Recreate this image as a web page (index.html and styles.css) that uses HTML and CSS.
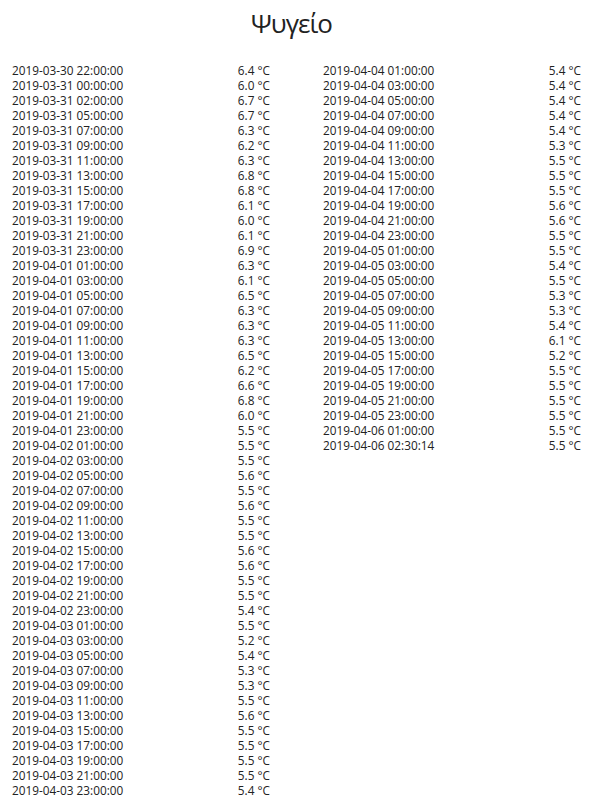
FILE: index.html
```html
<!DOCTYPE html>
<html lang="el">
<head>
    <meta charset="UTF-8">
    <title>Ψυγείο</title>
    <link rel="stylesheet" href="styles.css">
</head>
<body>
    <h1 class="title">Ψυγείο</h1>
    <div class="columns">
        <div class="log">
            <div class="row"><span>2019-03-30 22:00:00</span><span>6.4 °C</span></div>
            <div class="row"><span>2019-03-31 00:00:00</span><span>6.0 °C</span></div>
            <div class="row"><span>2019-03-31 02:00:00</span><span>6.7 °C</span></div>
            <div class="row"><span>2019-03-31 05:00:00</span><span>6.7 °C</span></div>
            <div class="row"><span>2019-03-31 07:00:00</span><span>6.3 °C</span></div>
            <div class="row"><span>2019-03-31 09:00:00</span><span>6.2 °C</span></div>
            <div class="row"><span>2019-03-31 11:00:00</span><span>6.3 °C</span></div>
            <div class="row"><span>2019-03-31 13:00:00</span><span>6.8 °C</span></div>
            <div class="row"><span>2019-03-31 15:00:00</span><span>6.8 °C</span></div>
            <div class="row"><span>2019-03-31 17:00:00</span><span>6.1 °C</span></div>
            <div class="row"><span>2019-03-31 19:00:00</span><span>6.0 °C</span></div>
            <div class="row"><span>2019-03-31 21:00:00</span><span>6.1 °C</span></div>
            <div class="row"><span>2019-03-31 23:00:00</span><span>6.9 °C</span></div>
            <div class="row"><span>2019-04-01 01:00:00</span><span>6.3 °C</span></div>
            <div class="row"><span>2019-04-01 03:00:00</span><span>6.1 °C</span></div>
            <div class="row"><span>2019-04-01 05:00:00</span><span>6.5 °C</span></div>
            <div class="row"><span>2019-04-01 07:00:00</span><span>6.3 °C</span></div>
            <div class="row"><span>2019-04-01 09:00:00</span><span>6.3 °C</span></div>
            <div class="row"><span>2019-04-01 11:00:00</span><span>6.3 °C</span></div>
            <div class="row"><span>2019-04-01 13:00:00</span><span>6.5 °C</span></div>
            <div class="row"><span>2019-04-01 15:00:00</span><span>6.2 °C</span></div>
            <div class="row"><span>2019-04-01 17:00:00</span><span>6.6 °C</span></div>
            <div class="row"><span>2019-04-01 19:00:00</span><span>6.8 °C</span></div>
            <div class="row"><span>2019-04-01 21:00:00</span><span>6.0 °C</span></div>
            <div class="row"><span>2019-04-01 23:00:00</span><span>5.5 °C</span></div>
            <div class="row"><span>2019-04-02 01:00:00</span><span>5.5 °C</span></div>
            <div class="row"><span>2019-04-02 03:00:00</span><span>5.5 °C</span></div>
            <div class="row"><span>2019-04-02 05:00:00</span><span>5.6 °C</span></div>
            <div class="row"><span>2019-04-02 07:00:00</span><span>5.5 °C</span></div>
            <div class="row"><span>2019-04-02 09:00:00</span><span>5.6 °C</span></div>
            <div class="row"><span>2019-04-02 11:00:00</span><span>5.5 °C</span></div>
            <div class="row"><span>2019-04-02 13:00:00</span><span>5.5 °C</span></div>
            <div class="row"><span>2019-04-02 15:00:00</span><span>5.6 °C</span></div>
            <div class="row"><span>2019-04-02 17:00:00</span><span>5.6 °C</span></div>
            <div class="row"><span>2019-04-02 19:00:00</span><span>5.5 °C</span></div>
            <div class="row"><span>2019-04-02 21:00:00</span><span>5.5 °C</span></div>
            <div class="row"><span>2019-04-02 23:00:00</span><span>5.4 °C</span></div>
            <div class="row"><span>2019-04-03 01:00:00</span><span>5.5 °C</span></div>
            <div class="row"><span>2019-04-03 03:00:00</span><span>5.2 °C</span></div>
            <div class="row"><span>2019-04-03 05:00:00</span><span>5.4 °C</span></div>
            <div class="row"><span>2019-04-03 07:00:00</span><span>5.3 °C</span></div>
            <div class="row"><span>2019-04-03 09:00:00</span><span>5.3 °C</span></div>
            <div class="row"><span>2019-04-03 11:00:00</span><span>5.5 °C</span></div>
            <div class="row"><span>2019-04-03 13:00:00</span><span>5.6 °C</span></div>
            <div class="row"><span>2019-04-03 15:00:00</span><span>5.5 °C</span></div>
            <div class="row"><span>2019-04-03 17:00:00</span><span>5.5 °C</span></div>
            <div class="row"><span>2019-04-03 19:00:00</span><span>5.5 °C</span></div>
            <div class="row"><span>2019-04-03 21:00:00</span><span>5.5 °C</span></div>
            <div class="row"><span>2019-04-03 23:00:00</span><span>5.4 °C</span></div>
        </div>
        <div class="log">
            <div class="row"><span>2019-04-04 01:00:00</span><span>5.4 °C</span></div>
            <div class="row"><span>2019-04-04 03:00:00</span><span>5.4 °C</span></div>
            <div class="row"><span>2019-04-04 05:00:00</span><span>5.4 °C</span></div>
            <div class="row"><span>2019-04-04 07:00:00</span><span>5.4 °C</span></div>
            <div class="row"><span>2019-04-04 09:00:00</span><span>5.4 °C</span></div>
            <div class="row"><span>2019-04-04 11:00:00</span><span>5.3 °C</span></div>
            <div class="row"><span>2019-04-04 13:00:00</span><span>5.5 °C</span></div>
            <div class="row"><span>2019-04-04 15:00:00</span><span>5.5 °C</span></div>
            <div class="row"><span>2019-04-04 17:00:00</span><span>5.5 °C</span></div>
            <div class="row"><span>2019-04-04 19:00:00</span><span>5.6 °C</span></div>
            <div class="row"><span>2019-04-04 21:00:00</span><span>5.6 °C</span></div>
            <div class="row"><span>2019-04-04 23:00:00</span><span>5.5 °C</span></div>
            <div class="row"><span>2019-04-05 01:00:00</span><span>5.5 °C</span></div>
            <div class="row"><span>2019-04-05 03:00:00</span><span>5.4 °C</span></div>
            <div class="row"><span>2019-04-05 05:00:00</span><span>5.5 °C</span></div>
            <div class="row"><span>2019-04-05 07:00:00</span><span>5.3 °C</span></div>
            <div class="row"><span>2019-04-05 09:00:00</span><span>5.3 °C</span></div>
            <div class="row"><span>2019-04-05 11:00:00</span><span>5.4 °C</span></div>
            <div class="row"><span>2019-04-05 13:00:00</span><span>6.1 °C</span></div>
            <div class="row"><span>2019-04-05 15:00:00</span><span>5.2 °C</span></div>
            <div class="row"><span>2019-04-05 17:00:00</span><span>5.5 °C</span></div>
            <div class="row"><span>2019-04-05 19:00:00</span><span>5.5 °C</span></div>
            <div class="row"><span>2019-04-05 21:00:00</span><span>5.5 °C</span></div>
            <div class="row"><span>2019-04-05 23:00:00</span><span>5.5 °C</span></div>
            <div class="row"><span>2019-04-06 01:00:00</span><span>5.5 °C</span></div>
            <div class="row"><span>2019-04-06 02:30:14</span><span>5.5 °C</span></div>
        </div>
    </div>
</body>
</html>
```

FILE: styles.css
```css
body {
    margin: 0;
    font-family: 'Open Sans', 'Noto Sans', sans-serif;
    color: #222;
    background: white;
}
.title {
    margin: 0;
    padding: 5px 18px 0 0;
    height: 58px;
    text-align: center;
    font-size: 26px;
    font-weight: normal;
    letter-spacing: -1px;
    line-height: 36px;
}
.columns {
    display: grid;
    grid-template-columns: 258px 258px;
    column-gap: 53px;
    align-items: start;
    padding-left: 12px;
}
.log {
    font-size: 11.8px;
    line-height: 15px;
}
.row {
    display: flex;
    justify-content: space-between;
}
```
